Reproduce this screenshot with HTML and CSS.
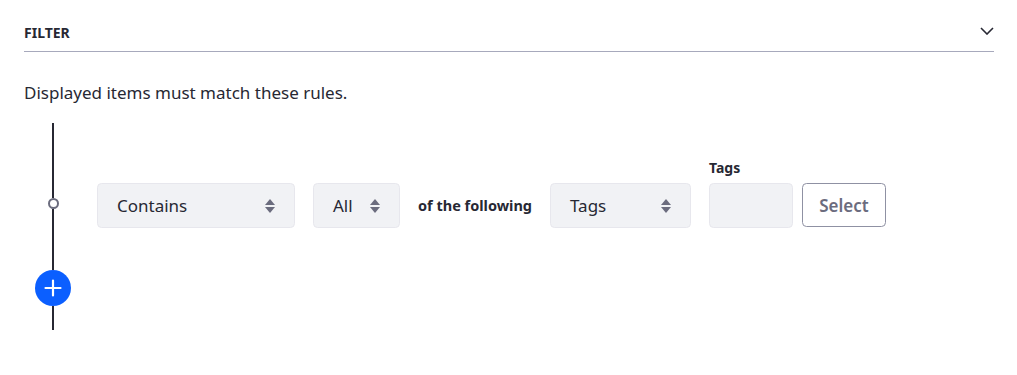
FILE: index.html
```html
<!DOCTYPE html>
<html>
<head>
<meta charset="utf-8">
<link rel="stylesheet" href="styles.css">
</head>
<body>
<div class="sheet">
  <div class="panel-header">
    <span class="panel-title">Filter</span>
    <svg class="chevron" width="14" height="8" viewBox="0 0 14 8"><path d="M1 1 L7 7 L13 1" fill="none" stroke="#272833" stroke-width="1.6"/></svg>
  </div>
  <p class="intro">Displayed items must match these rules.</p>
  <div class="rules">
    <div class="timeline">
      <span class="seg seg-top"></span>
      <span class="dot"></span>
      <span class="seg seg-mid"></span>
      <button class="add-btn" aria-label="Add rule">
        <svg width="18" height="18" viewBox="0 0 18 18"><path d="M9 1.5 V16.5 M1.5 9 H16.5" stroke="#fff" stroke-width="2.2" stroke-linecap="round"/></svg>
      </button>
      <span class="seg seg-bot"></span>
    </div>
    <div class="rule-row">
      <div class="select select-contains"><span>Contains</span><span class="carets"></span></div>
      <div class="select select-all"><span>All</span><span class="carets"></span></div>
      <span class="following">of the following</span>
      <div class="select select-tags"><span>Tags</span><span class="carets"></span></div>
      <div class="field">
        <label class="field-label">Tags</label>
        <div class="input"></div>
      </div>
      <button class="btn-select">Select</button>
    </div>
  </div>
</div>
</body>
</html>
```
FILE: styles.css
```css
* { box-sizing: border-box; }
body {
  margin: 0;
  font-family: "Noto Sans", "Open Sans", sans-serif;
  color: #272833;
  background: #fff;
}
.sheet {
  padding: 0 23px 0 24px;
}
.panel-header {
  display: flex;
  justify-content: space-between;
  align-items: center;
  height: 52px;
  padding-top: 13px;
  border-bottom: 1px solid #a7a9bc;
}
.panel-title {
  font-size: 14px;
  font-weight: 700;
  text-transform: uppercase;
}
.chevron {
  margin-top: -2px;
}
.intro {
  margin: 27px 0 0;
  font-size: 17px;
  line-height: 27px;
}
.rules {
  display: flex;
  margin-top: 17px;
}
.timeline {
  width: 58px;
  margin-right: 15px;
  display: flex;
  flex-direction: column;
  align-items: center;
}
.seg {
  width: 2px;
  background: #272833;
}
.seg-top { height: 75px; }
.seg-mid { height: 61px; }
.seg-bot { height: 24px; }
.dot {
  width: 11px;
  height: 11px;
  border: 2px solid #6b6c7e;
  border-radius: 50%;
  background: #fff;
}
.add-btn {
  width: 36px;
  height: 36px;
  border-radius: 50%;
  border: 0;
  background: #0b5fff;
  padding: 0;
  display: flex;
  align-items: center;
  justify-content: center;
}
.rule-row {
  display: flex;
  align-items: flex-end;
  gap: 18px;
  height: 105px;
}
.select {
  height: 45px;
  background: #f1f2f5;
  border: 1px solid #e7e7ed;
  border-radius: 4.5px;
  display: flex;
  align-items: center;
  justify-content: space-between;
  padding: 0 19px;
  font-size: 17px;
}
.select-contains { width: 198px; }
.select-all { width: 87px; }
.select-tags { width: 141px; }
.carets {
  width: 10px;
  height: 20px;
  position: relative;
}
.carets::before, .carets::after {
  content: "";
  position: absolute;
  left: 0;
  border-left: 5px solid transparent;
  border-right: 5px solid transparent;
}
.carets::before {
  top: 3px;
  border-bottom: 6px solid #6b6c7e;
}
.carets::after {
  top: 11px;
  border-top: 6px solid #6b6c7e;
}
.following {
  font-size: 14.5px;
  font-weight: 700;
  line-height: 45px;
}
.field {
  display: flex;
  flex-direction: column;
}
.field-label {
  font-size: 14px;
  font-weight: 700;
  margin-bottom: 6px;
}
.input {
  width: 84px;
  height: 45px;
  background: #f1f2f5;
  border: 1px solid #e7e7ed;
  border-radius: 4.5px;
}
.btn-select {
  margin-left: -9px;
  width: 84px;
  height: 44px;
  margin-bottom: 1px;
  background: #fff;
  border: 1px solid #8f91a3;
  border-radius: 4.5px;
  color: #6b6c7e;
  font-family: inherit;
  font-size: 17px;
  font-weight: 600;
  padding: 0;
}
```
